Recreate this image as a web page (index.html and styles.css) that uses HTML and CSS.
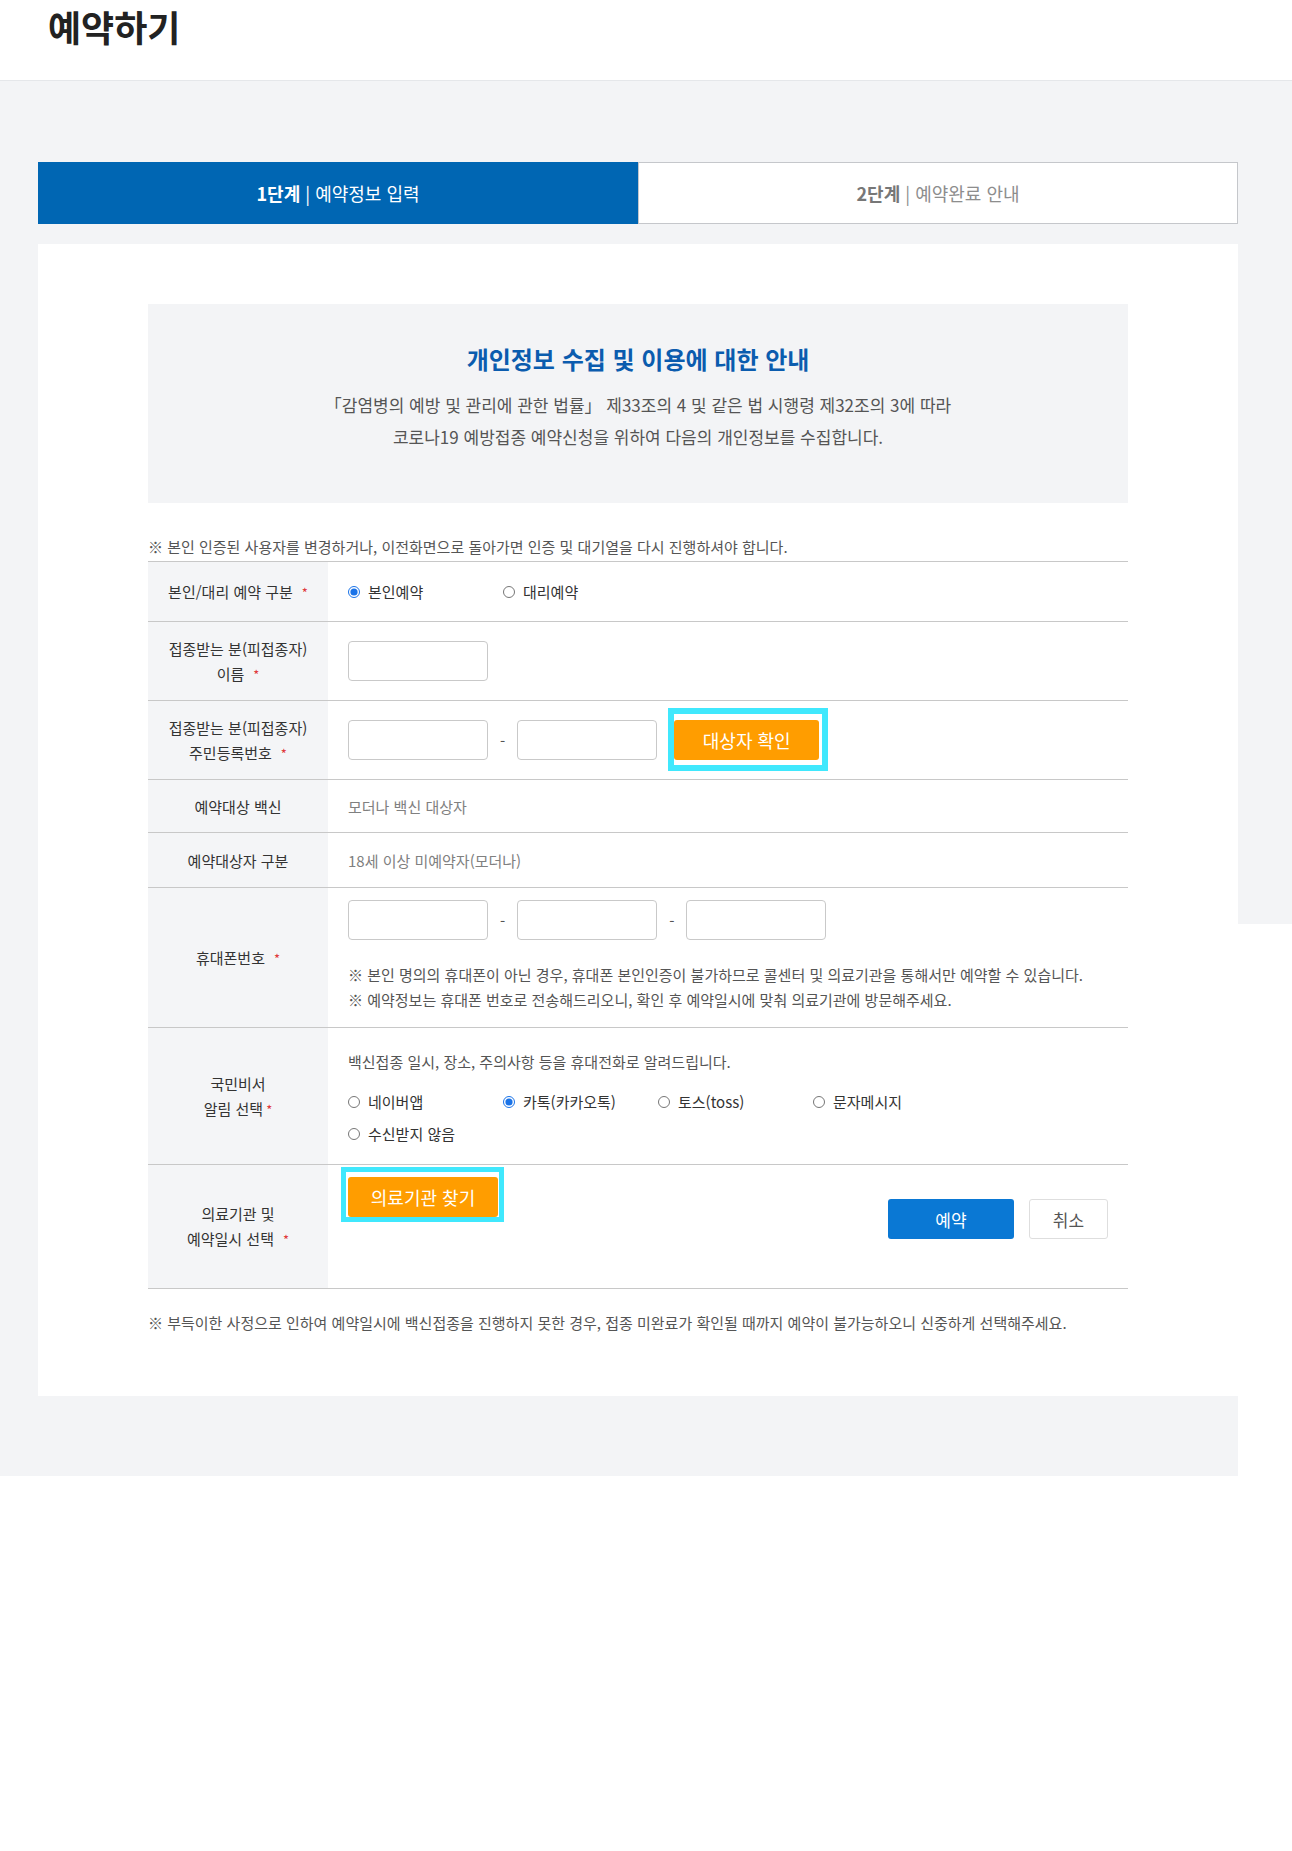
FILE: index.html
```html
<!DOCTYPE html>
<html lang="ko">
<head>
<meta charset="utf-8">
<title>예약하기</title>
<link rel="stylesheet" href="styles.css">
</head>
<body>
<header class="page-header">
  <h1 class="page-title">예약하기</h1>
</header>
<main class="page-main">
  <section class="content-area">
    <div class="steps">
      <div class="step step-active"><b>1단계</b>&nbsp;|&nbsp;예약정보 입력</div>
      <div class="step"><b>2단계</b>&nbsp;|&nbsp;예약완료 안내</div>
    </div>
    <div class="card">
      <div class="notice-box">
        <h2 class="notice-title">개인정보 수집 및 이용에 대한 안내</h2>
        <p class="notice-text">「감염병의 예방 및 관리에 관한 법률」 제33조의 4 및 같은 법 시행령 제32조의 3에 따라<br>코로나19 예방접종 예약신청을 위하여 다음의 개인정보를 수집합니다.</p>
      </div>
      <p class="form-note top-note">※ 본인 인증된 사용자를 변경하거나, 이전화면으로 돌아가면 인증 및 대기열을 다시 진행하셔야 합니다.</p>
      <div class="form-table">
        <div class="row row-type">
          <div class="th"><div>본인/대리 예약 구분<span class="req">*</span></div></div>
          <div class="td">
            <label class="radio"><input type="radio" name="type" checked><span>본인예약</span></label>
            <label class="radio"><input type="radio" name="type"><span>대리예약</span></label>
          </div>
        </div>
        <div class="row row-name">
          <div class="th"><div>접종받는 분(피접종자)<br>이름<span class="req">*</span></div></div>
          <div class="td">
            <input class="field" type="text">
          </div>
        </div>
        <div class="row row-ssn">
          <div class="th"><div>접종받는 분(피접종자)<br>주민등록번호<span class="req">*</span></div></div>
          <div class="td">
            <input class="field" type="text">
            <span class="dash">-</span>
            <input class="field" type="text">
            <span class="hl hl-check"><button class="btn btn-orange btn-check" type="button">대상자 확인</button></span>
          </div>
        </div>
        <div class="row row-vaccine">
          <div class="th"><div>예약대상 백신</div></div>
          <div class="td value">모더나 백신 대상자</div>
        </div>
        <div class="row row-group">
          <div class="th"><div>예약대상자 구분</div></div>
          <div class="td value">18세 이상 미예약자(모더나)</div>
        </div>
        <div class="row row-phone">
          <div class="th"><div>휴대폰번호<span class="req">*</span></div></div>
          <div class="td td-stack">
            <div class="phone-inputs">
              <input class="field" type="text">
              <span class="dash">-</span>
              <input class="field" type="text">
              <span class="dash">-</span>
              <input class="field" type="text">
            </div>
            <p class="phone-note">※ 본인 명의의 휴대폰이 아닌 경우, 휴대폰 본인인증이 불가하므로 콜센터 및 의료기관을 통해서만 예약할 수 있습니다.<br>※ 예약정보는 휴대폰 번호로 전송해드리오니, 확인 후 예약일시에 맞춰 의료기관에 방문해주세요.</p>
          </div>
        </div>
        <div class="row row-alert">
          <div class="th"><div>국민비서<br>알림 선택<span class="req req-tight">*</span></div></div>
          <div class="td td-stack td-alert">
            <p class="alert-text">백신접종 일시, 장소, 주의사항 등을 휴대전화로 알려드립니다.</p>
            <div class="alert-options">
              <label class="radio"><input type="radio" name="alert"><span>네이버앱</span></label>
              <label class="radio"><input type="radio" name="alert" checked><span>카톡(카카오톡)</span></label>
              <label class="radio"><input type="radio" name="alert"><span>토스(toss)</span></label>
              <label class="radio"><input type="radio" name="alert"><span>문자메시지</span></label>
              <label class="radio"><input type="radio" name="alert"><span>수신받지 않음</span></label>
            </div>
          </div>
        </div>
        <div class="row row-hospital">
          <div class="th"><div>의료기관 및<br>예약일시 선택<span class="req">*</span></div></div>
          <div class="td td-hospital">
            <span class="hl hl-find"><button class="btn btn-orange btn-find" type="button">의료기관 찾기</button></span>
            <div class="actions">
              <button class="btn btn-primary" type="button">예약</button>
              <button class="btn btn-cancel" type="button">취소</button>
            </div>
          </div>
        </div>
      </div>
      <p class="form-note bottom-note">※ 부득이한 사정으로 인하여 예약일시에 백신접종을 진행하지 못한 경우, 접종 미완료가 확인될 때까지 예약이 불가능하오니 신중하게 선택해주세요.</p>
    </div>
  </section>
  <div class="side-strip"></div>
</main>
</body>
</html>
```
FILE: styles.css
```css
html, body {
  margin: 0;
  padding: 0;
  background: #fff;
}
body {
  font-family: "Noto Sans CJK KR", "Noto Sans", sans-serif;
  color: #333;
}

.page-header {
  height: 80px;
  border-bottom: 1px solid #e5e7ea;
  padding-left: 48px;
}
.page-title {
  margin: 0;
  padding-top: 6px;
  font-size: 36px;
  line-height: 40px;
  font-weight: 700;
  color: #222;
}

.page-main {
  display: flex;
  align-items: flex-start;
}
.content-area {
  width: 1238px;
  flex: none;
  box-sizing: border-box;
  background: #f3f4f6;
  padding: 81px 0 80px 38px;
}
.side-strip {
  width: 54px;
  height: 843px;
  background: #f3f4f6;
}

.steps {
  display: flex;
  height: 62px;
}
.step {
  flex: 1;
  display: flex;
  align-items: center;
  justify-content: center;
  font-size: 18px;
  color: #8d8d8d;
  background: #fff;
  border: 1px solid #c5c7cb;
}
.step b {
  font-weight: 700;
  color: #777;
}
.step-active {
  background: #0066b3;
  border-color: #0066b3;
  color: #fff;
}
.step-active b {
  color: #fff;
}

.card {
  background: #fff;
  margin-top: 20px;
  padding: 60px 110px 63px;
}

.notice-box {
  height: 199px;
  box-sizing: border-box;
  background: #f3f4f6;
  padding-top: 39px;
  text-align: center;
}
.notice-title {
  margin: 0;
  font-size: 24px;
  line-height: 32px;
  font-weight: 700;
  color: #0b5cae;
}
.notice-text {
  margin: 14px 0 0;
  font-size: 17px;
  line-height: 32px;
  color: #555;
}

.form-note {
  font-size: 15px;
  line-height: 20px;
  color: #555;
}
.top-note {
  margin: 34px 0 4px;
}
.bottom-note {
  margin: 24px 0 0;
}

.form-table {
  border-top: 1px solid #c8c8c8;
}
.row {
  display: flex;
  box-sizing: border-box;
  border-bottom: 1px solid #c8c8c8;
}
.row-type { height: 60px; }
.row-name { height: 79px; }
.row-ssn { height: 79px; }
.row-vaccine { height: 53px; }
.row-group { height: 55px; }
.row-phone { height: 140px; }
.row-alert { height: 137px; }
.row-hospital { height: 124px; }

.th {
  width: 180px;
  flex: none;
  display: flex;
  align-items: center;
  justify-content: center;
  text-align: center;
  background: #f4f5f7;
  font-size: 15px;
  line-height: 25px;
  color: #333;
}
.req {
  color: #e0393b;
  font-size: 13px;
  margin-left: 9px;
}
.req-tight {
  margin-left: 3px;
}

.td {
  flex: 1;
  display: flex;
  align-items: center;
  padding: 0 20px;
  font-size: 15px;
}
.value {
  color: #808080;
}
.td-stack {
  flex-direction: column;
  align-items: flex-start;
  justify-content: flex-start;
}

.field {
  width: 140px;
  height: 40px;
  box-sizing: border-box;
  border: 1px solid #c9c9c9;
  border-radius: 4px;
  background: #fff;
  margin: 0;
}
.dash {
  margin: 0 12px;
  color: #555;
}

.radio {
  width: 155px;
  flex: none;
  display: flex;
  align-items: center;
  gap: 8px;
  font-size: 15px;
  color: #333;
}
.radio input {
  width: 12px;
  height: 12px;
  margin: 0;
  accent-color: #1a73e8;
}

.btn {
  font-family: inherit;
  border-radius: 3px;
  height: 40px;
  padding: 0;
  cursor: pointer;
}
.btn-orange {
  background: #ff9d00;
  border: 0;
  color: #fff;
  font-size: 18px;
}
.btn-check {
  width: 145px;
}
.btn-find {
  width: 150px;
}
.btn-primary {
  width: 126px;
  background: #0a78d4;
  border: 0;
  color: #fff;
  font-size: 17px;
}
.btn-cancel {
  width: 79px;
  background: #fff;
  border: 1px solid #dedede;
  color: #555;
  font-size: 17px;
}

.hl {
  position: relative;
  display: inline-flex;
}
.hl::after {
  content: "";
  position: absolute;
  border: 6px solid #40e8fd;
  pointer-events: none;
}
.hl-check {
  margin-left: 17px;
}
.hl-check::after {
  top: -12px;
  left: -6px;
  right: -9px;
  bottom: -11px;
}
.hl-find::after {
  top: -10px;
  left: -7px;
  right: -6px;
  bottom: -5px;
  border-width: 5px;
}

.row-phone .td {
  padding-top: 12px;
}
.phone-inputs {
  display: flex;
  align-items: center;
}
.phone-note {
  margin: 22px 0 0;
  font-size: 15px;
  line-height: 25px;
  color: #555;
}

.td-alert {
  padding-top: 22px;
}
.alert-text {
  margin: 0;
  line-height: 24px;
  color: #555;
}
.alert-options {
  display: grid;
  grid-template-columns: repeat(4, 155px);
  row-gap: 8px;
  margin-top: 16px;
}
.alert-options .radio {
  line-height: 24px;
}

.td-hospital {
  align-items: flex-start;
  justify-content: space-between;
  padding-top: 12px;
}
.actions {
  display: flex;
  gap: 15px;
  margin-top: 22px;
}
```
